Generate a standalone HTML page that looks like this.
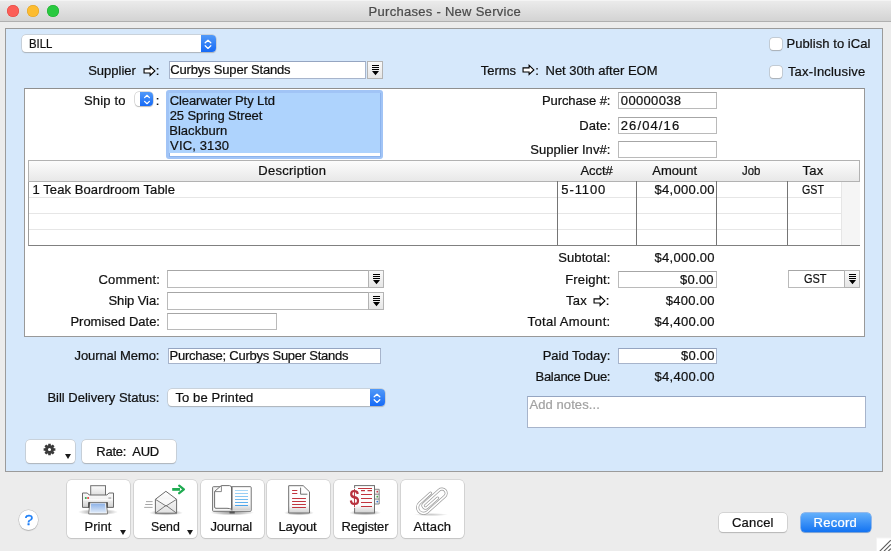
<!DOCTYPE html>
<html><head><meta charset="utf-8"><title>Purchases - New Service</title>
<style>
*{box-sizing:border-box;margin:0;padding:0}
html,body{width:891px;height:551px;overflow:hidden;background:#ececec}
body{position:relative;font-family:"Liberation Sans",sans-serif;font-size:13px;color:#111;line-height:15px}
.abs,.abs>*{position:absolute}
.abs{left:0;top:0;width:891px;height:551px;will-change:transform}
.t{white-space:pre;transform-origin:0 0;-webkit-text-stroke:.22px currentColor}
#titlebar{left:0;top:0;width:891px;height:22px;background:linear-gradient(#ececec,#d3d3d3);border-bottom:1px solid #b0b0b0;box-shadow:inset 0 1px 0 #f4f4f4}
.tl{width:12px;height:12px;border-radius:50%;top:5px}
#bluep{left:5px;top:27.5px;width:877.5px;height:444px;background:#d6e8fb;border:1px solid #9b9b9b}
#whitep{left:24px;top:88px;width:841px;height:249px;background:#fff;border:1px solid #999;border-top-color:#8f8f8f}
.fld{background:#fff;border:1px solid #bababa;border-top-color:#a6a6a6}
.fldb{border-color:#a7b4cb;border-top-color:#95a5c1}
.popup{background:#fff;border-radius:4px;box-shadow:0 0 0 .5px #bcbcbc,0 1px 1px rgba(0,0,0,.25)}
.popup .cap{position:absolute;right:0;top:0;bottom:0;width:14.8px;border-radius:0 4px 4px 0;background:linear-gradient(#5199f8,#166af6)}
.dd svg{position:absolute}
.dd{width:16px;height:18px;background:linear-gradient(#f9f9f9,#e6e6e6);border:1px solid #b3b3b3}
.cb{width:12.4px;height:12.4px;border-radius:3px;background:#fff;box-shadow:0 0 0 .5px #b3b3b3,0 .5px 1px rgba(0,0,0,.25)}
.btn{background:#fff;border-radius:4px;box-shadow:0 0 0 .5px #bbb,0 1px 1px rgba(0,0,0,.24)}
.tb{width:63.4px;height:58px;top:480px;background:#fff;border-radius:4.5px;box-shadow:0 0 0 .6px #c3c3c3,0 1px 1px rgba(0,0,0,.16)}
.tri{width:0;height:0;border-left:3.5px solid transparent;border-right:3.5px solid transparent;border-top:5px solid #1a1a1a}
.vl{width:1px;top:181px;height:64px;background:#757575}
.hl{left:29px;width:812px;height:1px;background:#e6e6e6}
</style></head><body>
<div class="abs">
<div id="titlebar"></div>
<div class="tl" style="left:7px;background:#fc5e57;box-shadow:inset 0 0 0 .5px #df453e"></div>
<div class="tl" style="left:27px;background:#fdbc2f;box-shadow:inset 0 0 0 .5px #de9f24"></div>
<div class="tl" style="left:47px;background:#29c940;box-shadow:inset 0 0 0 .5px #1dab2d"></div>

<div id="bluep"></div>
<div id="whitep"></div>

<!-- BILL popup -->
<div class="popup" style="left:21.5px;top:35.3px;width:194.2px;height:17.2px"><div class="cap"><svg style="position:absolute;right:3.4px;top:2.5px" width="8" height="12" viewBox="0 0 8 12"><path d="M1.2 4.8L4 2.2L6.8 4.8M1.2 7.8L4 10.4L6.8 7.8" fill="none" stroke="#fff" stroke-width="1.3" stroke-linecap="round" stroke-linejoin="round"/></svg></div></div>

<!-- supplier row -->
<svg style="left:142.5px;top:64.5px" width="13" height="12" viewBox="0 0 13 12"><path d="M1.05 3.9H7.1V1.4L11.9 5.95L7.1 10.5V8H1.05Z" fill="#fff" stroke="#000" stroke-width="1.1"/></svg>
<div class="fld fldb" style="left:169px;top:61px;width:197px;height:18px"></div>
<div class="dd" style="left:367px;top:61px"><svg style="left:4px;top:3px" width="7" height="11" viewBox="0 0 7 11"><path d="M0 0h7v1H0zM0 2h7v1H0zM0 4h7v1H0zM0 6h7L3.5 10.2z" fill="#000"/></svg></div>
<svg style="left:522px;top:64.2px" width="13" height="12" viewBox="0 0 13 12"><path d="M1.05 3.9H7.1V1.4L11.9 5.95L7.1 10.5V8H1.05Z" fill="#fff" stroke="#000" stroke-width="1.1"/></svg>
<div class="cb" style="left:769.8px;top:37.8px"></div>
<div class="cb" style="left:769.8px;top:65.8px"></div>

<!-- ship to -->
<div class="popup" style="left:134.5px;top:92.4px;width:18px;height:14.1px"><div class="cap" style="width:12.5px"><svg style="position:absolute;right:1.8px;top:0.8px" width="8" height="13" viewBox="0 0 8 13"><path d="M1.6 4.6L4 2.3L6.4 4.6M1.6 8.4L4 10.7L6.4 8.4" fill="none" stroke="#fff" stroke-width="1.25" stroke-linecap="round" stroke-linejoin="round"/></svg></div></div>
<div style="left:166px;top:90px;width:217px;height:69px;border-radius:3px;background:#a1c4f6"></div>
<div style="left:168.5px;top:92.5px;width:212px;height:64px;background:#fff;border:1px solid #8cb3ed"></div>
<div style="left:169px;top:93px;width:211px;height:60px;background:#aed3fd"></div>

<div class="fld" style="left:618px;top:92px;width:99px;height:17px"></div>
<div class="fld" style="left:618px;top:117px;width:99px;height:17px"></div>
<div class="fld" style="left:618px;top:141px;width:99px;height:17px"></div>

<!-- table -->
<div style="left:28px;top:160px;width:832px;height:22px;background:linear-gradient(#fcfcfc,#e8e8e8);border:1px solid #b2b2b2"></div>
<div style="left:28px;top:182px;width:832px;height:64px;background:#fff;border-left:1px solid #9c9c9c;border-bottom:1px solid #808080"></div>
<div style="left:841px;top:182px;width:19px;height:63px;background:#f5f5f5;border-left:1px solid #e6e6e6"></div>
<div class="hl" style="top:197px"></div>
<div class="hl" style="top:213px"></div>
<div class="hl" style="top:229px"></div>
<div class="vl" style="left:557px"></div>
<div class="vl" style="left:636px"></div>
<div class="vl" style="left:716px"></div>
<div class="vl" style="left:787px"></div>

<!-- totals -->
<div class="fld" style="left:618px;top:271px;width:99px;height:17px"></div>
<div class="fld" style="left:788px;top:270px;width:57px;height:18px"></div>
<div class="dd" style="left:844px;top:270px"><svg style="left:4px;top:3px" width="7" height="11" viewBox="0 0 7 11"><path d="M0 0h7v1H0zM0 2h7v1H0zM0 4h7v1H0zM0 6h7L3.5 10.2z" fill="#000"/></svg></div>
<svg style="left:592.8px;top:294.6px" width="13" height="12" viewBox="0 0 13 12"><path d="M1.05 3.9H7.1V1.4L11.9 5.95L7.1 10.5V8H1.05Z" fill="#fff" stroke="#000" stroke-width="1.1"/></svg>

<div class="fld" style="left:167px;top:270px;width:202px;height:18px"></div>
<div class="dd" style="left:368px;top:270px"><svg style="left:4px;top:3px" width="7" height="11" viewBox="0 0 7 11"><path d="M0 0h7v1H0zM0 2h7v1H0zM0 4h7v1H0zM0 6h7L3.5 10.2z" fill="#000"/></svg></div>
<div class="fld" style="left:167px;top:292px;width:202px;height:18px"></div>
<div class="dd" style="left:368px;top:292px"><svg style="left:4px;top:3px" width="7" height="11" viewBox="0 0 7 11"><path d="M0 0h7v1H0zM0 2h7v1H0zM0 4h7v1H0zM0 6h7L3.5 10.2z" fill="#000"/></svg></div>
<div class="fld" style="left:167px;top:313px;width:110px;height:17px"></div>

<!-- memo -->
<div class="fld fldb" style="left:168px;top:347.5px;width:213px;height:16.3px"></div>
<div class="popup" style="left:167.5px;top:389.2px;width:217px;height:17px"><div class="cap"><svg style="position:absolute;right:3.4px;top:2.5px" width="8" height="12" viewBox="0 0 8 12"><path d="M1.2 4.8L4 2.2L6.8 4.8M1.2 7.8L4 10.4L6.8 7.8" fill="none" stroke="#fff" stroke-width="1.3" stroke-linecap="round" stroke-linejoin="round"/></svg></div></div>
<div class="fld fldb" style="left:618px;top:347.5px;width:99px;height:16.3px"></div>
<div class="fld fldb" style="left:527px;top:396px;width:339px;height:32px"></div>

<!-- gear / rate -->
<div class="btn" style="left:25.5px;top:439.5px;width:49.5px;height:23px"></div>
<svg style="left:43.2px;top:443.1px" width="13" height="13" viewBox="0 0 13 13"><path fill-rule="evenodd" d="M10.80 5.17L12.37 5.25L12.37 7.75L10.80 7.83L10.48 8.60L11.53 9.77L9.77 11.53L8.60 10.48L7.83 10.80L7.75 12.37L5.25 12.37L5.17 10.80L4.40 10.48L3.23 11.53L1.47 9.77L2.52 8.60L2.20 7.83L0.63 7.75L0.63 5.25L2.20 5.17L2.52 4.40L1.47 3.23L3.23 1.47L4.40 2.52L5.17 2.20L5.25 0.63L7.75 0.63L7.83 2.20L8.60 2.52L9.77 1.47L11.53 3.23L10.48 4.40ZM8.05 6.5A1.55 1.55 0 1 0 4.95 6.5A1.55 1.55 0 1 0 8.05 6.5Z" fill="#3b3b3b"/></svg>
<div class="tri" style="left:65.4px;top:454px"></div>
<div class="btn" style="left:81.5px;top:439.5px;width:94px;height:23px"></div>

<!-- toolbar -->
<div class="btn" style="left:18.6px;top:510.4px;width:19.8px;height:19.8px;border-radius:50%"></div>
<div class="t" style="left:24.5px;top:511.4px;font-size:15.5px;line-height:18px;color:#1a7df7;-webkit-text-stroke:.35px #1a7df7">?</div>
<div class="tb" style="left:66.8px"></div>
<div class="tri" style="left:120px;top:530px"></div>
<div class="tb" style="left:133.9px"></div>
<div class="tri" style="left:187px;top:530px"></div>
<div class="tb" style="left:200.6px"></div>
<div class="tb" style="left:267px"></div>
<div class="tb" style="left:334px"></div>
<div class="tb" style="left:400.7px"></div>
<svg style="left:0;top:0;pointer-events:none" width="891" height="551" viewBox="0 0 891 551">
<defs>
<linearGradient id="gPaper" x1="0" y1="0" x2="0" y2="1"><stop offset="0" stop-color="#fdfdfd"/><stop offset="1" stop-color="#dcdcdc"/></linearGradient>
<linearGradient id="gBody" x1="0" y1="0" x2="0" y2="1"><stop offset="0" stop-color="#fafafa"/><stop offset=".45" stop-color="#f1f1f1"/><stop offset="1" stop-color="#cfcfcf"/></linearGradient>
<linearGradient id="gBlue" x1="0" y1="0" x2="0" y2="1"><stop offset="0" stop-color="#86ade6"/><stop offset="1" stop-color="#e3edf9"/></linearGradient>
<linearGradient id="gDoc" x1="0" y1="0" x2="0" y2="1"><stop offset="0" stop-color="#fff"/><stop offset=".72" stop-color="#fbfbfb"/><stop offset="1" stop-color="#cfcfcf"/></linearGradient>
<linearGradient id="gEnv" x1="0" y1="0" x2="0" y2="1"><stop offset="0" stop-color="#fff"/><stop offset="1" stop-color="#e2e2e2"/></linearGradient>
<linearGradient id="gLines" x1="0" y1="0" x2="0" y2="1"><stop offset="0" stop-color="#a9d8f7"/><stop offset="1" stop-color="#4aa2ea"/></linearGradient>
<radialGradient id="gSh"><stop offset="0" stop-color="#000" stop-opacity=".42"/><stop offset=".6" stop-color="#000" stop-opacity=".2"/><stop offset="1" stop-color="#000" stop-opacity="0"/></radialGradient>
</defs>
<!-- PRINT -->
<ellipse cx="98" cy="512" rx="20" ry="3.2" fill="url(#gSh)"/>
<rect x="90.7" y="485.7" width="14.8" height="10" fill="url(#gPaper)" stroke="#6f6f6f"/>
<path d="M82.5 493H87.3L89.3 495H106.9L108.9 493H113.5V507.4H82.5Z" fill="url(#gBody)" stroke="#6b6b6b" stroke-linejoin="round"/>
<rect x="83.2" y="499.3" width="29.6" height="1" fill="#fff" opacity=".9"/>
<rect x="88.3" y="502.2" width="19.4" height="5.4" fill="#222"/>
<path d="M90.6 502.8H105.6L106.7 513.3H89.5Z" fill="url(#gBlue)" stroke="#fff" stroke-width="1.2"/>
<path d="M89.9 502.6H106.3L107.5 513.9H88.7Z" fill="none" stroke="#6d6d6d" stroke-width=".9"/>
<circle cx="85.8" cy="498" r="1" fill="#2fa84f"/><circle cx="88.1" cy="498" r="1" fill="#e23a3a"/>
<rect x="108.4" y="497.4" width="2.8" height="1.3" fill="#a9a9a9"/>
<!-- SEND -->
<ellipse cx="166" cy="512.8" rx="17" ry="2.8" fill="url(#gSh)"/>
<path d="M155.4 499.3L165.9 491.3L176.6 499.3V513.2H155.4Z" fill="url(#gEnv)" stroke="#6c6c6c" stroke-linejoin="round"/>
<path d="M155.4 499.3L166 506L176.6 499.3" fill="#fff" fill-opacity=".5" stroke="#6c6c6c" stroke-width=".9"/>
<path d="M155.4 513.2L166 505.4L176.6 513.2" fill="none" stroke="#6c6c6c" stroke-width=".9"/>
<path d="M146 501.6H152.6M145.2 504.5H152.6M144.2 507.4H152.6" stroke="#9d9d9d" stroke-width=".9"/>
<path d="M172.2 489.4H180" stroke="#1fab51" stroke-width="2.8"/>
<path d="M179.2 485.6L183.9 489.4L179.2 493.2" fill="none" stroke="#1fab51" stroke-width="2.3" stroke-linejoin="round" stroke-linecap="round"/>
<!-- JOURNAL -->
<ellipse cx="232" cy="512.6" rx="22" ry="2.8" fill="url(#gSh)"/>
<rect x="212.6" y="486.7" width="38.6" height="24.6" rx=".8" fill="#f6f6f6" stroke="#717171"/>
<rect x="232.6" y="487.6" width="17.6" height="22.4" fill="url(#gDoc)"/>
<path d="M235.2 490.5H248M235.2 493.5H248M235.2 496.5H248M235.2 499.5H248M235.2 502.5H248M235.2 505.5H248" stroke="url(#gLines)" stroke-width="1"/>
<path d="M235.2 490.5H248" stroke="#a9d8f7"/><path d="M235.2 493.5H248" stroke="#98cff5"/><path d="M235.2 496.5H248" stroke="#86c6f3"/><path d="M235.2 499.5H248" stroke="#72bbf0"/><path d="M235.2 502.5H248" stroke="#5eb0ee"/><path d="M235.2 505.5H248" stroke="#4aa3ea"/>
<path d="M214.6 491.4L221.3 485.6H229.5Q231.6 485.8 231.6 488V509.3Q229.5 508.3 227 508.3H216Q214.6 508.3 214.6 507Z" fill="#fff" stroke="#707070" stroke-linejoin="round"/>
<path d="M214.9 491.6H221.4V485.9" fill="none" stroke="#7a7a7a" stroke-width=".9"/>
<path d="M231.9 487V510.5" stroke="#5a5a5a" stroke-width="1.1"/>
<rect x="229.5" y="511.4" width="5.2" height="2.1" fill="#555"/>
<!-- LAYOUT -->
<ellipse cx="299" cy="512.8" rx="15" ry="2.8" fill="url(#gSh)"/>
<path d="M288.7 485.7H303.2L309.5 491.8V513H288.7Z" fill="url(#gDoc)" stroke="#6f6f6f" stroke-linejoin="round"/>
<path d="M300.6 487.6V494.2H307.4" fill="none" stroke="#707070" stroke-width="1"/>
<path d="M292.1 490.5H297.3M292.1 493.4H297.3M292.1 498.4H305.9M292.1 501.4H305.9M292.1 504.4H305.9M292.1 507.4H305.9" stroke="#c1353e" stroke-width="1.05"/>
<!-- REGISTER -->
<ellipse cx="365" cy="512.8" rx="16" ry="2.8" fill="url(#gSh)"/>
<path d="M374.5 489.3H379.2V504H374.5" fill="#f4f4f4" stroke="#7c7c7c" stroke-width=".9"/>
<path d="M374.5 494.2H379.2M374.5 499.1H379.2" stroke="#7c7c7c" stroke-width=".9"/>
<circle cx="377.3" cy="491.7" r=".9" fill="#c93a4a"/><circle cx="377.3" cy="496.7" r=".9" fill="#45a84a"/><circle cx="377.3" cy="501.6" r=".9" fill="#2f74d6"/>
<rect x="354.6" y="485.6" width="19.9" height="27.4" fill="url(#gDoc)" stroke="#6f6f6f"/>
<path d="M358 488.5H372M361 490.6H365M367.5 490.6H372M361 494.5H372M361 498.5H372M361 502.5H372M361 506.5H372" stroke="#c1353e" stroke-width="1.05"/>
<text x="349.6" y="504.9" font-family="Liberation Sans,sans-serif" font-weight="bold" font-size="21.2" fill="#b8323f" stroke="#fff" stroke-width="1.6" paint-order="stroke" textLength="9.9" lengthAdjust="spacingAndGlyphs">$</text>
<!-- ATTACH -->
<ellipse cx="431" cy="514.6" rx="17" ry="1.6" fill="url(#gSh)" opacity=".5"/>
<g transform="translate(431.5 500.3) rotate(-42)" fill="none" stroke-linecap="round" stroke-linejoin="round">
<path id="clip" d="M4 -5.9H-10.75A5.9 5.9 0 0 0 -10.75 5.9H12.5A4.2 4.2 0 0 0 12.5 -2.5H-8A2.45 2.45 0 0 0 -8 2.4H6" stroke="#9b9b9b" stroke-width="3.1"/>
<path d="M4 -5.9H-10.75A5.9 5.9 0 0 0 -10.75 5.9H12.5A4.2 4.2 0 0 0 12.5 -2.5H-8A2.45 2.45 0 0 0 -8 2.4H6" stroke="#fff" stroke-width="1.7"/>
</g>
</svg>

<div class="btn" style="left:719px;top:512.9px;width:68.3px;height:19.3px"></div>
<div class="btn" style="left:800.5px;top:512.9px;width:70.2px;height:19.3px;background:linear-gradient(#64b0fb,#1373f2);box-shadow:0 0 0 .5px #3a86ea,0 1px 1px rgba(0,0,0,.2)"></div>
<svg style="left:876px;top:537px" width="15" height="14" viewBox="0 0 15 14"><rect x="0" y="0.5" width="15" height="14" fill="#f3f3f3"/><rect x="1" y="1.4" width="14" height="13" fill="#fff"/><path d="M14.8 3.2L3.6 14.4M14.8 7.4L7.8 14.4M14.8 11.6L12 14.4" stroke="#5c5c5c" stroke-width="1.1" fill="none"/></svg>
<div class="t" style="left:368.6px;top:3.8px;letter-spacing:0.28px;color:#4b4b4b">Purchases - New Service</div>
<div class="t" style="left:28.5px;top:35.8px;transform:scaleX(0.877)">BILL</div>
<div class="t" style="left:88.2px;top:63.2px">Supplier</div>
<div class="t" style="left:155.7px;top:63.2px">:</div>
<div class="t" style="left:170.3px;top:62.0px;letter-spacing:-0.18px">Curbys Super Stands</div>
<div class="t" style="left:480.7px;top:62.9px">Terms</div>
<div class="t" style="left:535.2px;top:62.9px">:</div>
<div class="t" style="left:545.5px;top:62.9px">Net 30th after EOM</div>
<div class="t" style="left:786.6px;top:35.5px;letter-spacing:0.05px">Publish to iCal</div>
<div class="t" style="left:787.9px;top:63.5px;letter-spacing:0.18px">Tax-Inclusive</div>
<div class="t" style="left:84.0px;top:92.8px;letter-spacing:0.17px">Ship to</div>
<div class="t" style="left:155.7px;top:92.8px">:</div>
<div class="t" style="left:169.7px;top:92.8px;letter-spacing:-0.10px">Clearwater Pty Ltd</div>
<div class="t" style="left:169.7px;top:107.8px;letter-spacing:-0.09px">25 Spring Street</div>
<div class="t" style="left:169.2px;top:122.8px;letter-spacing:0.04px">Blackburn</div>
<div class="t" style="left:170.1px;top:137.8px;letter-spacing:0.14px">VIC, 3130</div>
<div class="t" style="left:542.0px;top:92.7px;letter-spacing:-0.10px">Purchase #:</div>
<div class="t" style="left:620.8px;top:92.7px;letter-spacing:0.35px">00000038</div>
<div class="t" style="left:579.3px;top:117.8px;letter-spacing:0.05px">Date:</div>
<div class="t" style="left:620.7px;top:117.8px;letter-spacing:1.13px">26/04/16</div>
<div class="t" style="left:530.3px;top:141.5px;letter-spacing:0.04px">Supplier Inv#:</div>
<div class="t" style="left:258.3px;top:162.9px;letter-spacing:0.26px">Description</div>
<div class="t" style="left:580.4px;top:162.9px;letter-spacing:-0.03px">Acct#</div>
<div class="t" style="left:652.3px;top:162.9px">Amount</div>
<div class="t" style="left:741.9px;top:162.9px;transform:scaleX(0.877)">Job</div>
<div class="t" style="left:802.4px;top:162.9px;letter-spacing:0.33px">Tax</div>
<div class="t" style="left:32.4px;top:182.0px;letter-spacing:0.10px">1 Teak Boardroom Table</div>
<div class="t" style="left:561.3px;top:182.0px;letter-spacing:0.89px">5-1100</div>
<div class="t" style="left:654.6px;top:182.0px;letter-spacing:0.26px">$4,000.00</div>
<div class="t" style="left:802.1px;top:182.0px;transform:scaleX(0.819)">GST</div>
<div class="t" style="left:558.3px;top:250.2px;letter-spacing:0.08px">Subtotal:</div>
<div class="t" style="left:654.6px;top:250.2px;letter-spacing:0.26px">$4,000.00</div>
<div class="t" style="left:565.2px;top:272.0px;letter-spacing:0.17px">Freight:</div>
<div class="t" style="left:680.1px;top:272.0px;letter-spacing:0.24px">$0.00</div>
<div class="t" style="left:803.9px;top:271.0px;transform:scaleX(0.842)">GST</div>
<div class="t" style="left:566.1px;top:292.8px;letter-spacing:0.18px">Tax</div>
<div class="t" style="left:605.8px;top:292.8px">:</div>
<div class="t" style="left:665.7px;top:292.8px;letter-spacing:0.29px">$400.00</div>
<div class="t" style="left:527.6px;top:313.6px;letter-spacing:0.32px">Total Amount:</div>
<div class="t" style="left:654.6px;top:313.6px;letter-spacing:0.26px">$4,400.00</div>
<div class="t" style="left:98.5px;top:272.0px;letter-spacing:0.20px">Comment:</div>
<div class="t" style="left:108.4px;top:292.8px;letter-spacing:-0.06px">Ship Via:</div>
<div class="t" style="left:70.4px;top:313.6px">Promised Date:</div>
<div class="t" style="left:74.5px;top:348.0px;letter-spacing:-0.09px">Journal Memo:</div>
<div class="t" style="left:169.6px;top:348.0px;letter-spacing:-0.24px">Purchase; Curbys Super Stands</div>
<div class="t" style="left:47.4px;top:389.8px">Bill Delivery Status:</div>
<div class="t" style="left:175.5px;top:389.8px;letter-spacing:0.09px">To be Printed</div>
<div class="t" style="left:542.7px;top:347.8px">Paid Today:</div>
<div class="t" style="left:680.9px;top:347.6px;letter-spacing:0.29px">$0.00</div>
<div class="t" style="left:535.5px;top:368.8px;letter-spacing:-0.28px">Balance Due:</div>
<div class="t" style="left:654.6px;top:368.8px;letter-spacing:0.26px">$4,400.00</div>
<div class="t" style="left:529.5px;top:396.7px;letter-spacing:0.08px;color:#a2a2a2">Add notes...</div>
<div class="t" style="left:96.3px;top:443.5px;letter-spacing:-0.23px">Rate:  AUD</div>
<div class="t" style="left:84.6px;top:518.7px">Print</div>
<div class="t" style="left:150.9px;top:518.7px;transform:scaleX(0.949)">Send</div>
<div class="t" style="left:210.4px;top:518.7px;letter-spacing:-0.13px">Journal</div>
<div class="t" style="left:278.5px;top:518.7px;letter-spacing:-0.17px">Layout</div>
<div class="t" style="left:341.6px;top:518.7px;letter-spacing:-0.22px">Register</div>
<div class="t" style="left:413.5px;top:518.7px;letter-spacing:0.14px">Attach</div>
<div class="t" style="left:732.0px;top:514.9px;letter-spacing:0.20px">Cancel</div>
<div class="t" style="left:813.5px;top:514.9px;letter-spacing:0.28px;color:#fff">Record</div>
</div>
</body></html>
